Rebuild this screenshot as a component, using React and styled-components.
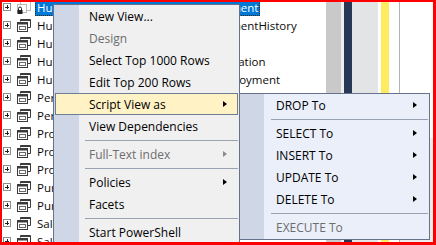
import styled, { createGlobalStyle } from "styled-components";

const GlobalStyle = createGlobalStyle`
    html, body {
        margin: 0;
        padding: 0;
        overflow: hidden;
        background: #fff;
    }
    body {
        font-family: "Open Sans", "Noto Sans", sans-serif;
        font-size: 11.5px;
        color: #000;
    }
`

const Frame = styled.div`
    position: relative;
    box-sizing: border-box;
    width: 436px;
    height: 245px;
    border-style: solid;
    border-color: #ff0000;
    border-width: 2px 3px 3px 2px;
    overflow: hidden;
    display: flex;
`

const Tree = styled.div`
    flex: 0 0 324px;
    display: flex;
    flex-direction: column;
    margin-top: -4px;
    background: #fff;
`

const Row = styled.div`
    display: flex;
    align-items: center;
    height: 18px;
    flex-shrink: 0;
    white-space: nowrap;
`

const PlusBox = styled.span`
    position: relative;
    box-sizing: border-box;
    width: 8px;
    height: 8px;
    margin-left: 1px;
    border: 1px solid #8c8c8c;
    background: #fff;
    flex-shrink: 0;
    &::before {
        content: "";
        position: absolute;
        left: 1px;
        top: 2.5px;
        width: 4px;
        height: 1px;
        background: #222;
    }
    &::after {
        content: "";
        position: absolute;
        left: 2.5px;
        top: 1px;
        width: 1px;
        height: 4px;
        background: #222;
    }
`

const IconSlot = styled.span`
    display: flex;
    margin-left: 6px;
    width: 14px;
    height: 13px;
    flex-shrink: 0;
`

const Label = styled.span`
    margin-left: 4px;
    padding: 0 1px;
    line-height: 15px;
    border: 1px dotted ${(props) => (props.selected ? "#3a2a10" : "transparent")};
    background: ${(props) => (props.selected ? "#0078d7" : "transparent")};
    color: ${(props) => (props.selected ? "#fff" : "#0a0a0a")};
`

const Strip = styled.div`
    flex: 0 0 ${(props) => props.w}px;
    background: ${(props) => props.bg};
`

const EdgePanel = styled.div`
    flex: 1;
    display: flex;
    flex-direction: column;
    background: #fff;
`

const EdgeBlock = styled.div`
    flex: 0 0 ${(props) => props.h}px;
    background: ${(props) => props.bg};
`

const Menu = styled.div`
    position: absolute;
    left: ${(props) => props.x}px;
    top: ${(props) => props.y}px;
    width: ${(props) => props.w}px;
    height: ${(props) => props.h}px;
    box-sizing: border-box;
    border: 1px solid #66728a;
    background: ${(props) => props.bg};
    display: flex;
    flex-direction: column;
    font-size: 12px;
    z-index: ${(props) => props.z || 1};
    &::before {
        content: "";
        position: absolute;
        left: 0;
        top: 0;
        bottom: 0;
        width: ${(props) => props.gutter}px;
        background: #cfd6e5;
    }
`

const Item = styled.div`
    position: relative;
    z-index: 1;
    box-sizing: border-box;
    height: 22px;
    flex-shrink: 0;
    margin: 0 1px;
    padding-left: ${(props) => props.indent}px;
    display: flex;
    align-items: center;
    white-space: nowrap;
    border: 1px solid ${(props) => (props.active ? "#6f7d94" : "transparent")};
    background: ${(props) => (props.active ? "#fff2c4" : "transparent")};
    color: ${(props) => (props.disabled ? "#6d6d6d" : "#000")};
`

const Arrow = styled.span`
    margin-left: auto;
    margin-right: ${(props) => props.right}px;
    width: 0;
    height: 0;
    border-top: 3.5px solid transparent;
    border-bottom: 3.5px solid transparent;
    border-left: 4px solid ${(props) => (props.disabled ? "#8a8a8a" : "#000")};
`

const Separator = styled.div`
    position: relative;
    z-index: 1;
    height: 6px;
    flex-shrink: 0;
    margin-left: ${(props) => props.indent}px;
    margin-right: 1px;
    &::after {
        content: "";
        position: absolute;
        left: 0;
        right: 0;
        top: 3px;
        height: 1px;
        background: #99a2b2;
    }
`

function ViewIcon() {
    return (
        <svg width="14" height="13" viewBox="0 0 14 13">
            <path d="M3.5 2.5V0.5h10v8h-3" fill="none" stroke="#3a3a3a" />
            <rect x="3.5" y="0.5" width="10" height="1.5" fill="#3a3a3a" />
            <rect x="0.5" y="3.5" width="10" height="9" fill="#fff" stroke="#3a3a3a" />
            <rect x="0.5" y="3.5" width="10" height="2" fill="#3a3a3a" />
            <rect x="2.5" y="7.5" width="6" height="3" fill="none" stroke="#6a6a6a" />
        </svg>
    )
}

function LockedViewIcon() {
    return (
        <svg width="14" height="13" viewBox="0 0 14 13">
            <rect x="3.5" y="0.5" width="10" height="9" fill="none" stroke="#777" strokeDasharray="1 1" />
            <rect x="0.5" y="3.5" width="9" height="8" fill="#fff" stroke="#777" strokeDasharray="1 1" />
            <path d="M1.5 9V7.5a1.5 1.5 0 0 1 3 0V9" fill="none" stroke="#222" />
            <rect x="0.5" y="9" width="5" height="4" fill="#222" />
        </svg>
    )
}

const rows = [
    { name: "HumanResources.vEmployeeDepartment", selected: true },
    { name: "HumanResources.vEmployeeDepartmentHistory" },
    { name: "HumanResources.vJobCandidate" },
    { name: "HumanResources.vJobCandidateEducation" },
    { name: "HumanResources.vJobCandidateEmployment" },
    { name: "Person.vAdditionalContactInfo" },
    { name: "Person.vStateProvinceCountryRegion" },
    { name: "Production.vProductAndDescription" },
    { name: "Production.vProductModelCatalogDescription" },
    { name: "Production.vProductModelInstructions" },
    { name: "Purchasing.vVendorWithAddresses" },
    { name: "Purchasing.vVendorWithContacts" },
    { name: "Sales.vIndividualCustomer" },
    { name: "Sales.vPersonDemographics" },
]

const mainMenu = [
    { label: "New View..." },
    { label: "Design", disabled: true },
    { label: "Select Top 1000 Rows" },
    { label: "Edit Top 200 Rows" },
    { label: "Script View as", active: true, sub: true },
    { label: "View Dependencies" },
    { sep: true },
    { label: "Full-Text index", disabled: true, sub: true },
    { sep: true },
    { label: "Policies", sub: true },
    { label: "Facets" },
    { sep: true },
    { label: "Start PowerShell" },
]

const scriptMenu = [
    { label: "DROP To", sub: true },
    { sep: true },
    { label: "SELECT To", sub: true },
    { label: "INSERT To", sub: true },
    { label: "UPDATE To", sub: true },
    { label: "DELETE To", sub: true },
    { sep: true },
    { label: "EXECUTE To", disabled: true },
]

function MenuEntries({ items, indent, sepIndent, arrowRight }) {
    return items.map((it, i) =>
        it.sep ? (
            <Separator key={i} indent={sepIndent} />
        ) : (
            <Item key={i} indent={indent} active={it.active} disabled={it.disabled}>
                {it.label}
                {it.sub && <Arrow right={arrowRight} disabled={it.disabled} />}
            </Item>
        )
    )
}

export default function App() {
    return (
        <>
            <GlobalStyle />
            <Frame>
                <Tree>
                    {rows.map((r) => (
                        <Row key={r.name}>
                            <PlusBox />
                            <IconSlot>{r.selected ? <LockedViewIcon /> : <ViewIcon />}</IconSlot>
                            <Label selected={r.selected}>{r.name}</Label>
                        </Row>
                    ))}
                </Tree>
                <Strip w={15} bg="#c9c9c9" />
                <Strip w={3} bg="#eeeeee" />
                <Strip w={8} bg="#283854" />
                <Strip w={26} bg="#e2e4e6" />
                <Strip w={3} bg="#ffffff" />
                <Strip w={8} bg="#ffeb5f" />
                <Strip w={10} bg="#ffffff" />
                <Strip w={1} bg="#b4b4b4" />
                <EdgePanel>
                    <EdgeBlock h={136} bg="#ffffff" />
                    <EdgeBlock h={110} bg="#ececec" />
                </EdgePanel>

                <Menu x={51} y={2} w={187} h={250} bg="#f0f0f0" gutter={25}>
                    <MenuEntries items={mainMenu} indent={33} sepIndent={31} arrowRight={10} />
                </Menu>

                <Menu x={237} y={91} w={191} h={147} bg="#ebeff9" gutter={24} z={2}>
                    <MenuEntries items={scriptMenu} indent={34} sepIndent={31} arrowRight={10} />
                </Menu>
            </Frame>
        </>
    )
}
